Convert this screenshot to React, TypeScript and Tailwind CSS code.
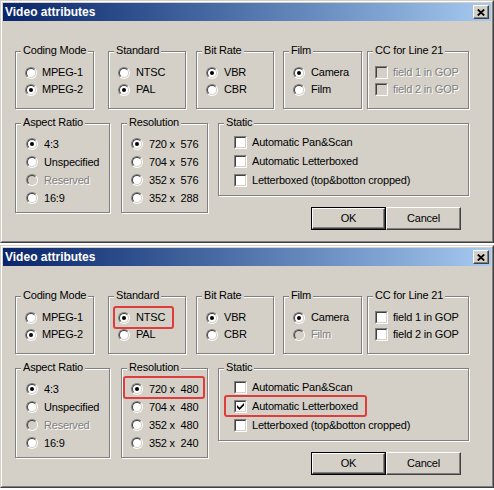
import React from 'react';

type Item = { label: string; checked?: boolean; disabled?: boolean; hl?: string };

function Radio({ checked, disabled }: { checked?: boolean; disabled?: boolean }) {
  return (
    <span className="relative inline-block h-[12px] w-[12px] shrink-0 rounded-full border border-t-[#808080] border-l-[#808080] border-b-white border-r-white">
      <span
        className={`absolute inset-0 rounded-full border border-t-[#404040] border-l-[#404040] border-b-[#d4d0c8] border-r-[#d4d0c8] ${
          disabled ? 'bg-[#d4d0c8]' : 'bg-white'
        }`}
      />
      {checked && (
        <span className={`absolute left-[3px] top-[3px] h-[4px] w-[4px] rounded-full ${disabled ? 'bg-[#808080]' : 'bg-black'}`} />
      )}
    </span>
  );
}

function Check({ checked, disabled }: { checked?: boolean; disabled?: boolean }) {
  return (
    <span className="relative inline-block h-[13px] w-[13px] shrink-0 border border-t-[#808080] border-l-[#808080] border-b-white border-r-white">
      <span
        className={`block h-full w-full border border-t-[#404040] border-l-[#404040] border-b-[#d4d0c8] border-r-[#d4d0c8] ${
          disabled ? 'bg-[#d4d0c8]' : 'bg-white'
        }`}
      />
      {checked && (
        <svg className="absolute left-[2px] top-[2px]" width="7" height="7" viewBox="0 0 7 7">
          <path d="M0 2 L2.5 4.5 L7 0 L7 2.6 L2.5 7 L0 4.6 Z" fill="#000" />
        </svg>
      )}
    </span>
  );
}

function Txt({ children, disabled }: { children: React.ReactNode; disabled?: boolean }) {
  return (
    <span
      className={`whitespace-pre leading-[13px] ${
        disabled ? 'text-[#808080] [text-shadow:1px_1px_0_#ffffff]' : 'text-black'
      }`}
    >
      {children}
    </span>
  );
}

function Highlight({ cls }: { cls: string }) {
  return <span className={`pointer-events-none absolute rounded-[3px] border-2 border-[#e03c3c] ${cls}`} />;
}

function RadioRow({ item, rowCls, gapCls }: { item: Item; rowCls: string; gapCls: string }) {
  return (
    <div className={`relative flex w-fit items-center ${rowCls} ${gapCls}`}>
      <Radio checked={item.checked} disabled={item.disabled} />
      <Txt disabled={item.disabled}>{item.label}</Txt>
      {item.hl && <Highlight cls={item.hl} />}
    </div>
  );
}

function CheckRow({ item, rowCls }: { item: Item; rowCls: string }) {
  return (
    <div className={`relative flex w-fit items-center gap-[5px] ${rowCls}`}>
      <Check checked={item.checked} disabled={item.disabled} />
      <Txt disabled={item.disabled}>{item.label}</Txt>
      {item.hl && <Highlight cls={item.hl} />}
    </div>
  );
}

function Group({ title, className, children }: { title: string; className: string; children: React.ReactNode }) {
  return (
    <div
      className={`relative shrink-0 border border-[#808080] shadow-[inset_1px_1px_0_#ffffff,1px_1px_0_#ffffff] ${className}`}
    >
      <span className="absolute -top-[8px] left-[5px] bg-[#d4d0c8] px-[2px] leading-[13px] text-black">{title}</span>
      {children}
    </div>
  );
}

function Raised({ className, children }: { className: string; children: React.ReactNode }) {
  return (
    <div
      className={`flex items-center justify-center border border-t-white border-l-white border-b-[#404040] border-r-[#404040] bg-[#d4d0c8] shadow-[inset_-1px_-1px_0_#808080] ${className}`}
    >
      {children}
    </div>
  );
}

type DialogData = {
  coding: Item[];
  standard: Item[];
  bitrate: Item[];
  film: Item[];
  cc: Item[];
  aspect: Item[];
  res: Item[];
  stat: Item[];
};

function Dialog({ d }: { d: DialogData }) {
  return (
    <div className="h-[243px] w-[494px] overflow-hidden border border-t-[#d4d0c8] border-l-[#d4d0c8] border-b-[#404040] border-r-[#404040] bg-[#d4d0c8]">
      <div className="h-full border border-t-white border-l-white border-b-[#808080] border-r-[#808080] p-[1px]">
        <div className="flex h-[18px] items-center justify-between bg-linear-to-r from-[#0a246a] to-[#a6caf0] pl-[2px] pr-[2px]">
          <span className="text-[12px] font-bold leading-[14px] tracking-normal text-white">Video attributes</span>
          <Raised className="h-[14px] w-[16px]">
            <svg width="8" height="7" viewBox="0 0 8 7">
              <path d="M0.8 0.5 L7.2 6.5 M7.2 0.5 L0.8 6.5" stroke="#000" strokeWidth="1.8" />
            </svg>
          </Raised>
        </div>

        <div className="pl-[12px] pt-[30px]">
          {/* Row 1 */}
          <div className="flex h-[58px]">
            <Group title="Coding Mode" className="h-[58px] w-[79px]">
              <div className="flex flex-col pl-[9px] pt-[12px]">
                {d.coding.map((it) => (
                  <RadioRow key={it.label} item={it} rowCls="h-[17px]" gapCls="gap-[5px]" />
                ))}
              </div>
            </Group>
            <Group title="Standard" className="ml-[14px] h-[58px] w-[78px]">
              <div className="flex flex-col pl-[9px] pt-[12px]">
                {d.standard.map((it) => (
                  <RadioRow key={it.label} item={it} rowCls="h-[17px]" gapCls="gap-[6px]" />
                ))}
              </div>
            </Group>
            <Group title="Bit Rate" className="ml-[10px] h-[58px] w-[78px]">
              <div className="flex flex-col pl-[9px] pt-[12px]">
                {d.bitrate.map((it) => (
                  <RadioRow key={it.label} item={it} rowCls="h-[17px]" gapCls="gap-[6px]" />
                ))}
              </div>
            </Group>
            <Group title="Film" className="ml-[9px] h-[58px] w-[79px]">
              <div className="flex flex-col pl-[9px] pt-[12px]">
                {d.film.map((it) => (
                  <RadioRow key={it.label} item={it} rowCls="h-[17px]" gapCls="gap-[6px]" />
                ))}
              </div>
            </Group>
            <Group title="CC for Line 21" className="ml-[5px] h-[58px] w-[102px]">
              <div className="flex flex-col pl-[7px] pt-[12px]">
                {d.cc.map((it) => (
                  <CheckRow key={it.label} item={it} rowCls="h-[17px]" />
                ))}
              </div>
            </Group>
          </div>

          {/* Row 2 */}
          <div className="mt-[14px] flex">
            <Group title="Aspect Ratio" className="h-[90px] w-[95px]">
              <div className="flex flex-col pl-[10px] pt-[11px]">
                {d.aspect.map((it) => (
                  <RadioRow key={it.label} item={it} rowCls="h-[18px]" gapCls="gap-[6px]" />
                ))}
              </div>
            </Group>
            <Group title="Resolution" className="ml-[11px] h-[90px] w-[87px]">
              <div className="flex flex-col pl-[9px] pt-[11px]">
                {d.res.map((it) => (
                  <RadioRow key={it.label} item={it} rowCls="h-[18px]" gapCls="gap-[6px]" />
                ))}
              </div>
            </Group>
            <div className="ml-[10px] flex w-[251px] flex-col">
              <Group title="Static" className="h-[73px] w-[251px]">
                <div className="flex flex-col pl-[15px] pt-[9px]">
                  {d.stat.map((it) => (
                    <CheckRow key={it.label} item={it} rowCls="h-[19px]" />
                  ))}
                </div>
              </Group>
              <div className="mt-[11px] flex justify-end pr-[8px]">
                <div className="h-[23px] w-[75px] border border-black">
                  <Raised className="h-full w-full">
                    <span className="leading-[13px] text-black">OK</span>
                  </Raised>
                </div>
                <Raised className="h-[23px] w-[75px]">
                  <span className="leading-[13px] text-black">Cancel</span>
                </Raised>
              </div>
            </div>
          </div>
        </div>
      </div>
    </div>
  );
}

const d1: DialogData = {
  coding: [{ label: 'MPEG-1' }, { label: 'MPEG-2', checked: true }],
  standard: [{ label: 'NTSC' }, { label: 'PAL', checked: true }],
  bitrate: [{ label: 'VBR', checked: true }, { label: 'CBR' }],
  film: [{ label: 'Camera', checked: true }, { label: 'Film' }],
  cc: [
    { label: 'field 1 in GOP', disabled: true },
    { label: 'field 2 in GOP', disabled: true },
  ],
  aspect: [
    { label: '4:3', checked: true },
    { label: 'Unspecified' },
    { label: 'Reserved', disabled: true },
    { label: '16:9' },
  ],
  res: [
    { label: '720 x  576', checked: true },
    { label: '704 x  576' },
    { label: '352 x  576' },
    { label: '352 x  288' },
  ],
  stat: [
    { label: 'Automatic Pan&Scan' },
    { label: 'Automatic Letterboxed' },
    { label: 'Letterboxed (top&botton cropped)' },
  ],
};

const d2: DialogData = {
  coding: [{ label: 'MPEG-1' }, { label: 'MPEG-2', checked: true }],
  standard: [
    { label: 'NTSC', checked: true, hl: '-left-[5px] -right-[9px] -top-[3px] -bottom-[3px]' },
    { label: 'PAL' },
  ],
  bitrate: [{ label: 'VBR', checked: true }, { label: 'CBR' }],
  film: [{ label: 'Camera', checked: true }, { label: 'Film', disabled: true }],
  cc: [{ label: 'field 1 in GOP' }, { label: 'field 2 in GOP' }],
  aspect: [
    { label: '4:3', checked: true },
    { label: 'Unspecified' },
    { label: 'Reserved', disabled: true },
    { label: '16:9' },
  ],
  res: [
    { label: '720 x  480', checked: true, hl: '-left-[8px] -right-[7px] -top-[4px] -bottom-[1px]' },
    { label: '704 x  480' },
    { label: '352 x  480' },
    { label: '352 x  240' },
  ],
  stat: [
    { label: 'Automatic Pan&Scan' },
    { label: 'Automatic Letterboxed', checked: true, hl: '-left-[10px] -right-[9px] -top-[2px] -bottom-[1px]' },
    { label: 'Letterboxed (top&botton cropped)' },
  ],
};

export default function App() {
  return (
    <div className="flex h-[490px] w-[494px] flex-col overflow-hidden bg-white font-['Liberation_Sans',Arial,sans-serif] text-[11px] tracking-[-0.2px]">
      <Dialog d={d1} />
      <div className="h-[2px] shrink-0" />
      <Dialog d={d2} />
    </div>
  );
}
